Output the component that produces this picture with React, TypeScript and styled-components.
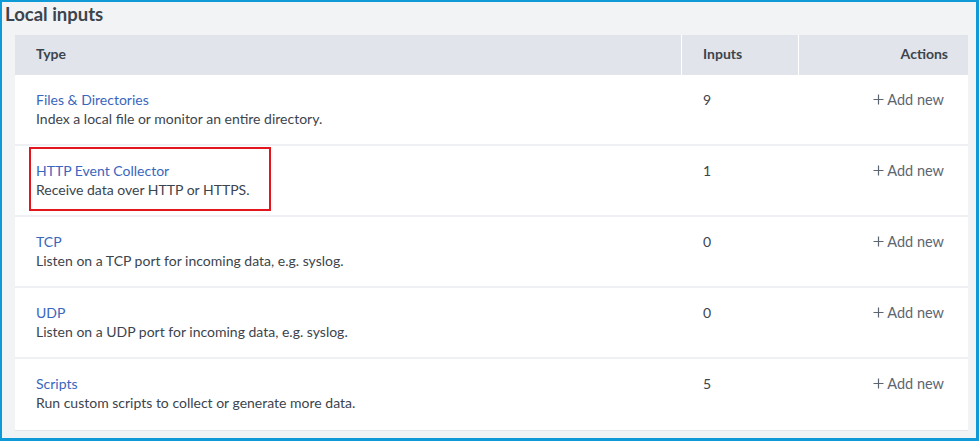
import React from "react";
import styled, { createGlobalStyle } from "styled-components";

const Global = createGlobalStyle`
  html, body { margin: 0; padding: 0; }
  body { font-family: Lato, "Liberation Sans", Arial, sans-serif; }
  * { box-sizing: border-box; }
`;

const Frame = styled.div`
  width: 979px;
  height: 441px;
  border-style: solid;
  border-color: #0e9ad7;
  border-width: 2px 3px 3px 2px;
  background: #f2f3f5;
  padding: 0 8px 0 13px;
  overflow: hidden;
`;

const Title = styled.h2`
  margin: 0 0 0 -10px;
  height: 33px;
  padding-top: 1px;
  font-size: 18.5px;
  font-weight: 700;
  color: #3c444d;
  line-height: 22px;
`;

const Table = styled.div`
  background: #ffffff;
  border-bottom: 1px solid #e4e6ea;
`;

const Cols = "666px 116px 1fr";

const HeadRow = styled.div`
  display: grid;
  grid-template-columns: ${Cols};
  height: 40px;
  column-gap: 1px;
  background: #ffffff;
`;

const HeadCell = styled.div<{ $right?: boolean }>`
  background: #e1e4ea;
  display: flex;
  align-items: center;
  justify-content: ${(p) => (p.$right ? "flex-end" : "flex-start")};
  padding: 0 20px 3px 21px;
  font-size: 14px;
  font-weight: 700;
  color: #3c444d;
`;

const Row = styled.div<{ $last?: boolean }>`
  display: grid;
  grid-template-columns: ${Cols};
  column-gap: 1px;
  height: 71px;
  border-bottom: ${(p) => (p.$last ? "none" : "2px solid #eef0f3")};
`;

const Cell = styled.div<{ $right?: boolean }>`
  position: relative;
  padding: 15px ${(p) => (p.$right ? "24px" : "20px")} 0 21px;
  font-size: 14px;
  line-height: 19px;
  color: #3c444d;
  display: flex;
  flex-direction: column;
  align-items: ${(p) => (p.$right ? "flex-end" : "flex-start")};
`;

const Link = styled.a`
  display: block;
  color: #3a66bd;
  text-decoration: none;
`;

const Desc = styled.div`
  color: #3c444d;
`;

const AddNew = styled.span`
  display: inline-flex;
  align-items: center;
  gap: 3px;
  color: #5c6570;
  font-size: 14.5px;
  svg {
    display: block;
  }
`;

const Highlight = styled.div`
  position: absolute;
  left: 14px;
  top: 1px;
  width: 242px;
  height: 64px;
  border: 2px solid #e3161e;
  pointer-events: none;
`;

const Plus = () => (
  <svg width="11" height="11" viewBox="0 0 11 11" aria-hidden="true">
    <path d="M5.5 0.5v10M0.5 5.5h10" stroke="#5c6570" strokeWidth="1.2" fill="none" />
  </svg>
);

const rows = [
  { name: "Files & Directories", desc: "Index a local file or monitor an entire directory.", n: 9 },
  { name: "HTTP Event Collector", desc: "Receive data over HTTP or HTTPS.", n: 1, mark: true },
  { name: "TCP", desc: "Listen on a TCP port for incoming data, e.g. syslog.", n: 0 },
  { name: "UDP", desc: "Listen on a UDP port for incoming data, e.g. syslog.", n: 0 },
  { name: "Scripts", desc: "Run custom scripts to collect or generate more data.", n: 5 },
];

export default function App() {
  return (
    <>
      <Global />
      <Frame>
        <Title>Local inputs</Title>
        <Table>
          <HeadRow>
            <HeadCell>Type</HeadCell>
            <HeadCell>Inputs</HeadCell>
            <HeadCell $right>Actions</HeadCell>
          </HeadRow>
          {rows.map((r, i) => (
            <Row key={r.name} $last={i === rows.length - 1}>
              <Cell>
                {r.mark && <Highlight />}
                <Link href="#">{r.name}</Link>
                <Desc>{r.desc}</Desc>
              </Cell>
              <Cell>{r.n}</Cell>
              <Cell $right>
                <AddNew>
                  <Plus />
                  Add new
                </AddNew>
              </Cell>
            </Row>
          ))}
        </Table>
      </Frame>
    </>
  );
}
